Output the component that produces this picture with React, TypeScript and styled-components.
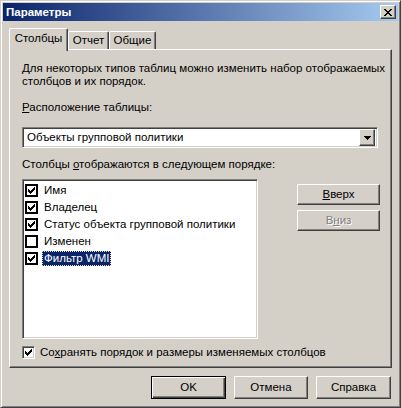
import React from 'react';
import styled, { createGlobalStyle, css } from 'styled-components';

const Global = createGlobalStyle`
  html, body { margin: 0; padding: 0; background: #d4d0c8; }
  body {
    font-family: "Liberation Sans", Arial, sans-serif;
    font-size: 11.5px;
    line-height: 13px;
    color: #000;
  }
  * { box-sizing: border-box; }
`;

const raised = css`
  border: 1px solid;
  border-color: #fff #404040 #404040 #fff;
  box-shadow: inset -1px -1px #808080;
`;

const sunken = css`
  border: 1px solid;
  border-color: #808080 #fff #fff #808080;
  box-shadow: inset 1px 1px #404040, inset -1px -1px #d4d0c8;
`;

const Window = styled.div`
  width: 401px;
  height: 408px;
  border: 1px solid;
  border-color: #d4d0c8 #404040 #404040 #d4d0c8;
  box-shadow: inset 1px 1px #fff, inset -1px -1px #808080;
  padding: 2px;
  display: flex;
  flex-direction: column;
  background: #d4d0c8;
`;

const TitleBar = styled.div`
  height: 18px;
  display: flex;
  align-items: center;
  justify-content: space-between;
  background: linear-gradient(to right, #0a246a, #a6caf0);
  padding: 0 2px 0 3px;
`;

const Title = styled.span`
  color: #fff;
  font-weight: bold;
  font-size: 11.5px;
`;

const CloseButton = styled.div`
  width: 16px;
  height: 14px;
  ${raised};
  background: #d4d0c8;
  display: flex;
  align-items: center;
  justify-content: center;
`;

const Body = styled.div`
  flex: 1;
  padding: 7px 6px 0 6px;
  display: flex;
  flex-direction: column;
`;

const TabsRow = styled.div`
  height: 21px;
  display: flex;
  align-items: flex-end;
  position: relative;
  z-index: 1;
`;

const Tab = styled.div<{ $active?: boolean; $w: number }>`
  width: ${p => p.$w}px;
  height: ${p => (p.$active ? 23 : 18)}px;
  margin-bottom: ${p => (p.$active ? -2 : 0)}px;
  padding-bottom: ${p => (p.$active ? 3 : 1)}px;
  border: 1px solid;
  border-bottom: none;
  border-color: #fff #404040 #404040 #fff;
  border-radius: 2px 2px 0 0;
  box-shadow: inset -1px 0 #808080;
  background: #d4d0c8;
  display: flex;
  align-items: center;
  justify-content: center;
`;

const Panel = styled.div`
  height: 319px;
  ${raised};
  padding: 12px 0 0 12px;
  display: flex;
  flex-direction: column;
`;

const Text = styled.div<{ $mt?: number }>`
  margin-top: ${p => p.$mt ?? 0}px;
  white-space: nowrap;
`;

const Combo = styled.div`
  margin-top: 13px;
  width: 356px;
  height: 21px;
  ${sunken};
  background: #fff;
  display: flex;
  align-items: center;
  justify-content: space-between;
  padding: 2px 2px 2px 4px;
`;

const ComboArrow = styled.div`
  width: 16px;
  height: 17px;
  ${raised};
  background: #d4d0c8;
  display: flex;
  align-items: center;
  justify-content: center;
`;

const ListArea = styled.div`
  margin-top: 8px;
  display: flex;
  align-items: flex-start;
  gap: 39px;
`;

const ListBox = styled.div`
  width: 236px;
  height: 160px;
  ${sunken};
  background: #fff;
  padding: 2px 2px;
  display: flex;
  flex-direction: column;
`;

const Row = styled.div`
  height: 17px;
  display: flex;
  align-items: center;
`;

const ListCheck = styled.div`
  width: 13px;
  height: 13px;
  border: 2px solid #000;
  background: #fff;
  display: flex;
  align-items: center;
  justify-content: center;
  flex: none;
`;

const ItemLabel = styled.span<{ $selected?: boolean }>`
  margin-left: 4px;
  padding: 0 2px;
  height: 15px;
  display: flex;
  align-items: center;
  ${p =>
    p.$selected &&
    css`
      background: #0a246a;
      color: #fff;
      outline: 1px dotted #e8e0a0;
      outline-offset: -1px;
    `}
`;

const SideButtons = styled.div`
  margin-top: 5px;
  display: flex;
  flex-direction: column;
  gap: 5px;
`;

const Button = styled.div<{ $w: number; $h?: number; $default?: boolean; $disabled?: boolean }>`
  width: ${p => p.$w}px;
  height: ${p => p.$h ?? 21}px;
  ${raised};
  background: #d4d0c8;
  display: flex;
  align-items: center;
  justify-content: center;
  ${p =>
    p.$default &&
    css`
      border: 1px solid #000;
      box-shadow: inset 1px 1px #fff, inset -1px -1px #404040, inset -2px -2px #808080;
    `}
  ${p =>
    p.$disabled &&
    css`
      color: #808080;
      text-shadow: 1px 1px #fff;
    `}
`;

const CheckRow = styled.div`
  margin-top: 7px;
  display: flex;
  align-items: center;
  gap: 5px;
`;

const Check3D = styled.div`
  width: 13px;
  height: 13px;
  ${sunken};
  background: #fff;
  display: flex;
  align-items: center;
  justify-content: center;
  flex: none;
`;

const Footer = styled.div`
  margin-top: 8px;
  display: flex;
  justify-content: flex-end;
  gap: 8px;
  padding-right: 1px;
`;

const Tick = () => (
  <svg width="7" height="7" viewBox="0 0 7 7" shapeRendering="crispEdges">
    <path d="M0 2h1v3h-1zM1 3h1v3h-1zM2 4h1v3h-1zM3 3h1v3h-1zM4 2h1v3h-1zM5 1h1v3h-1zM6 0h1v3h-1z" fill="#000" />
  </svg>
);

const CloseX = () => (
  <svg width="8" height="7" viewBox="0 0 8 7" shapeRendering="crispEdges">
    <path d="M0 0h2v1h-2zM6 0h2v1h-2zM1 1h2v1h-2zM5 1h2v1h-2zM2 2h4v1h-4zM3 3h2v1h-2zM2 4h4v1h-4zM1 5h2v1h-2zM5 5h2v1h-2zM0 6h2v1h-2zM6 6h2v1h-2z" fill="#000" />
  </svg>
);

const DownArrow = () => (
  <svg width="7" height="4" viewBox="0 0 7 4" shapeRendering="crispEdges">
    <path d="M0 0h7v1h-7zM1 1h5v1h-5zM2 2h3v1h-3zM3 3h1v1h-1z" fill="#000" />
  </svg>
);

const items = [
  { label: 'Имя', checked: true },
  { label: 'Владелец', checked: true },
  { label: 'Статус объекта групповой политики', checked: true },
  { label: 'Изменен', checked: false },
  { label: 'Фильтр WMI', checked: true, selected: true },
];

export default function App() {
  return (
    <>
      <Global />
      <Window>
        <TitleBar>
          <Title>Параметры</Title>
          <CloseButton>
            <CloseX />
          </CloseButton>
        </TitleBar>
        <Body>
          <TabsRow>
            <Tab $active $w={59}>Столбцы</Tab>
            <Tab $w={41}>Отчет</Tab>
            <Tab $w={47}>Общие</Tab>
          </TabsRow>
          <Panel>
            <Text>
              Для некоторых типов таблиц можно изменить набор отображаемых
              <br />
              столбцов и их порядок.
            </Text>
            <Text $mt={13}>
              <u>Р</u>асположение таблицы:
            </Text>
            <Combo>
              <span>Объекты групповой политики</span>
              <ComboArrow>
                <DownArrow />
              </ComboArrow>
            </Combo>
            <Text $mt={10}>
              Столбцы <u>о</u>тображаются в следующем порядке:
            </Text>
            <ListArea>
              <ListBox>
                {items.map(it => (
                  <Row key={it.label}>
                    <ListCheck>{it.checked && <Tick />}</ListCheck>
                    <ItemLabel $selected={it.selected}>{it.label}</ItemLabel>
                  </Row>
                ))}
              </ListBox>
              <SideButtons>
                <Button $w={83}>
                  <span>
                    <u>В</u>верх
                  </span>
                </Button>
                <Button $w={83} $disabled>
                  <span>
                    В<u>н</u>из
                  </span>
                </Button>
              </SideButtons>
            </ListArea>
            <CheckRow>
              <Check3D>
                <Tick />
              </Check3D>
              <span>
                Со<u>х</u>ранять порядок и размеры изменяемых столбцов
              </span>
            </CheckRow>
          </Panel>
          <Footer>
            <Button $w={75} $h={23} $default>OK</Button>
            <Button $w={74} $h={23}>Отмена</Button>
            <Button $w={75} $h={23}>Справка</Button>
          </Footer>
        </Body>
      </Window>
    </>
  );
}
